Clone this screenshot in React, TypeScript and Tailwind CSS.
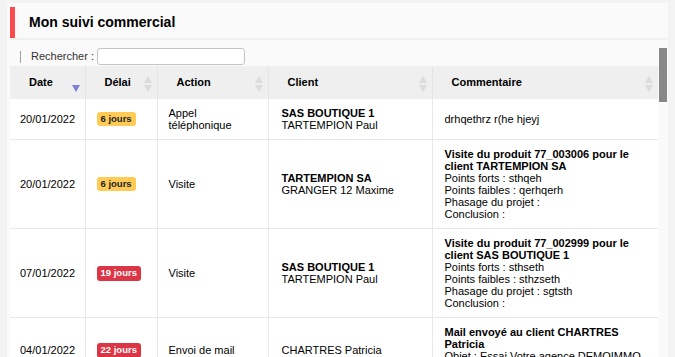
import React from "react";

type Row = {
  date: string;
  delai: string;
  late: boolean;
  action: string;
  client: string;
  contact: string;
  titre: string;
  lignes: string[];
};

const rows: Row[] = [
  {
    date: "20/01/2022",
    delai: "6 jours",
    late: false,
    action: "Appel téléphonique",
    client: "SAS BOUTIQUE 1",
    contact: "TARTEMPION Paul",
    titre: "",
    lignes: ["drhqethrz r(he hjeyj"],
  },
  {
    date: "20/01/2022",
    delai: "6 jours",
    late: false,
    action: "Visite",
    client: "TARTEMPION SA",
    contact: "GRANGER 12 Maxime",
    titre: "Visite du produit 77_003006 pour le client TARTEMPION SA",
    lignes: ["Points forts : sthqeh", "Points faibles : qerhqerh", "Phasage du projet :", "Conclusion :"],
  },
  {
    date: "07/01/2022",
    delai: "19 jours",
    late: true,
    action: "Visite",
    client: "SAS BOUTIQUE 1",
    contact: "TARTEMPION Paul",
    titre: "Visite du produit 77_002999 pour le client SAS BOUTIQUE 1",
    lignes: ["Points forts : sthseth", "Points faibles : sthzseth", "Phasage du projet : sgtsth", "Conclusion :"],
  },
  {
    date: "04/01/2022",
    delai: "22 jours",
    late: true,
    action: "Envoi de mail",
    client: "",
    contact: "CHARTRES Patricia",
    titre: "Mail envoyé au client CHARTRES Patricia",
    lignes: ["Objet : Essai Votre agence DEMOIMMO", "Message : Bonjour,"],
  },
];

function SortBoth() {
  return (
    <svg width="8" height="16" viewBox="0 0 8 16" className="mt-[2px] shrink-0">
      <path d="M4 0 L8 7 H0 Z" fill="#dcdcdc" />
      <path d="M0 9 H8 L4 16 Z" fill="#dcdcdc" />
    </svg>
  );
}

function SortDesc() {
  return (
    <svg width="8" height="16" viewBox="0 0 8 16" className="mt-[2px] shrink-0">
      <path d="M0 9 H8 L4 16 Z" fill="#7b7fd8" />
    </svg>
  );
}

function Th({ label, desc }: { label: string; desc?: boolean }) {
  return (
    <th className="h-[33px] border-r border-[#e4e4e4] p-0 text-left font-bold last:border-r-0">
      <div className="flex items-center justify-between pl-[19px] pr-[5px]">
        <span>{label}</span>
        {desc ? <SortDesc /> : <SortBoth />}
      </div>
    </th>
  );
}

export default function App() {
  return (
    <div className="h-screen overflow-hidden bg-[#f3f3f3] font-['Liberation_Sans',Arial,sans-serif] text-[11px] text-black">
      <div className="ml-[7px] mt-[3px] w-[661px] bg-[#fafafa] pl-[3px] pt-[4px]">
        {/* titre */}
        <div className="flex h-[31px] items-center border-l-[5px] border-[#fb4a4c] pl-[14px] text-[14px] font-bold">
          Mon suivi commercial
        </div>
        <div className="mr-[1px] h-[2px] bg-[#f0f0f0]" />

        <div className="flex">
          <div className="w-[648px]">
            {/* recherche */}
            <div className="flex h-[26px] items-start pt-[8px]">
              <span className="ml-[10px] mt-[3px] h-[12px] w-px bg-[#a0a0a0]" />
              <span className="ml-[10px] mr-[3px] leading-[17px] text-[#333]">Rechercher :</span>
              <input className="h-[17px] w-[148px] rounded-[3px] border border-[#c4c4c4] bg-white outline-none" />
            </div>

            {/* tableau */}
            <table className="w-[648px] table-fixed border-collapse bg-white">
              <colgroup>
                <col className="w-[75px]" />
                <col className="w-[72px]" />
                <col className="w-[111px]" />
                <col className="w-[164px]" />
                <col className="w-[226px]" />
              </colgroup>
              <thead className="bg-[#efefef]">
                <tr>
                  <Th label="Date" desc />
                  <Th label="Délai" />
                  <Th label="Action" />
                  <Th label="Client" />
                  <Th label="Commentaire" />
                </tr>
              </thead>
              <tbody className="leading-[12px]">
                {rows.map((r, i) => (
                  <tr key={i} className="border-b border-[#e8e8e8]">
                    <td className="border-r border-[#e8e8e8] py-2 pl-[10px] align-middle">{r.date}</td>
                    <td className="border-r border-[#e8e8e8] py-2 pl-[11px] align-middle">
                      <span
                        className={
                          r.late
                            ? "inline-block rounded-[3px] bg-[#dc3545] px-[4px] py-[1.5px] text-[9.5px] font-bold leading-[12px] text-white"
                            : "inline-block rounded-[3px] bg-[#ffcb55] px-[4px] py-[1px] text-[9.5px] font-bold leading-[12px] text-[#212529]"
                        }
                      >
                        {r.delai}
                      </span>
                    </td>
                    <td className="border-r border-[#e8e8e8] py-2 pl-[11px] pr-[10px] align-middle">{r.action}</td>
                    <td className="border-r border-[#e8e8e8] py-2 pl-[13px] pr-[10px] align-middle">
                      {r.client && <div className="font-bold">{r.client}</div>}
                      <div>{r.contact}</div>
                    </td>
                    <td className="py-2 pl-[12px] pr-[12px] align-middle">
                      {r.titre && <div className="font-bold">{r.titre}</div>}
                      {r.lignes.map((l, j) => (
                        <div key={j}>{l}</div>
                      ))}
                    </td>
                  </tr>
                ))}
              </tbody>
            </table>
          </div>

          {/* barre de défilement */}
          <div className="w-[10px] pl-[1px] pt-[8px]">
            <div className="h-[54px] w-[8px] bg-[#888]" />
          </div>
        </div>
      </div>
    </div>
  );
}
